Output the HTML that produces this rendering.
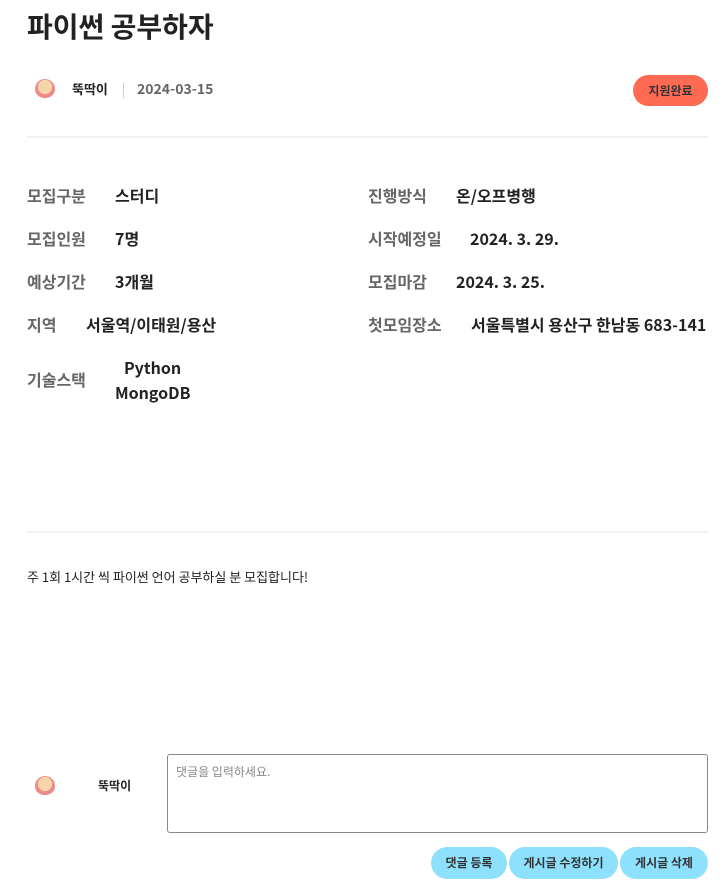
<!DOCTYPE html>
<html><head><meta charset="utf-8"><style>
body{margin:0;background:#fff;font-family:"Noto Sans CJK KR","Liberation Sans",sans-serif;color:#222;width:726px;height:889px;position:relative;overflow:hidden;line-height:1.2}
.a{position:absolute;white-space:nowrap}
.l{color:#666;font-size:16px;font-weight:bold}
.v{color:#222;font-size:16px;font-weight:bold}
.av{position:absolute;width:20px;height:20px;border-radius:50%;background:radial-gradient(circle at 50% 40%,#f6d6a8 45%,#f08a8a 46%,#f08a8a 70%,#fff 72%)}
.btn{position:absolute;top:847px;height:32px;border-radius:16px;background:#8ee1fd;font-size:12px;font-weight:bold;color:#333;text-align:center;line-height:32px}
</style></head><body>
<div class="a" style="left:27px;top:10px;font-size:28px;font-weight:bold;color:#222">파이썬 공부하자</div>
<div class="av" style="left:35px;top:79px"></div>
<div class="a" style="left:72px;top:81px;font-size:13px;font-weight:bold">뚝딱이</div>
<div class="a" style="left:123px;top:83px;width:1px;height:15px;background:#ccc"></div>
<div class="a" style="left:137px;top:81px;font-size:14px;font-weight:bold;color:#666">2024-03-15</div>
<div class="a" style="left:633px;top:75px;width:75px;height:31px;border-radius:16px;background:#ff6b52;color:#333;font-size:12px;font-weight:bold;text-align:center;line-height:31px">지원완료</div>
<div class="a" style="left:27px;top:136px;width:681px;height:2px;background:#f0f0f0"></div>

<div class="a l" style="left:27px;top:186px">모집구분</div><div class="a v" style="left:115px;top:186px">스터디</div>
<div class="a l" style="left:368px;top:186px">진행방식</div><div class="a v" style="left:456px;top:186px">온/오프병행</div>
<div class="a l" style="left:27px;top:229px">모집인원</div><div class="a v" style="left:115px;top:229px">7명</div>
<div class="a l" style="left:368px;top:229px">시작예정일</div><div class="a v" style="left:470px;top:229px">2024. 3. 29.</div>
<div class="a l" style="left:27px;top:272px">예상기간</div><div class="a v" style="left:115px;top:272px">3개월</div>
<div class="a l" style="left:368px;top:272px">모집마감</div><div class="a v" style="left:456px;top:272px">2024. 3. 25.</div>
<div class="a l" style="left:27px;top:315px">지역</div><div class="a v" style="left:86px;top:315px">서울역/이태원/용산</div>
<div class="a l" style="left:368px;top:315px">첫모임장소</div><div class="a v" style="left:471px;top:315px">서울특별시 용산구 한남동 683-141</div>
<div class="a l" style="left:27px;top:370px">기술스택</div>
<div class="a v" style="left:124px;top:358px">Python</div>
<div class="a v" style="left:115px;top:383px">MongoDB</div>

<div class="a" style="left:27px;top:531px;width:681px;height:2px;background:#f0f0f0"></div>
<div class="a" style="left:27px;top:569px;font-size:13px;color:#222">주 1회 1시간 씩 파이썬 언어 공부하실 분 모집합니다!</div>

<div class="av" style="left:35px;top:776px"></div>
<div class="a" style="left:98px;top:779px;font-size:12px;font-weight:bold">뚝딱이</div>
<div class="a" style="left:167px;top:754px;width:539px;height:77px;border:1px solid #888;border-radius:3px"></div>
<div class="a" style="left:176px;top:765px;font-size:12px;color:#888">댓글을 입력하세요.</div>
<div class="btn" style="left:431px;width:76px">댓글 등록</div>
<div class="btn" style="left:509px;width:109px">게시글 수정하기</div>
<div class="btn" style="left:620px;width:88px">게시글 삭제</div>
</body></html>
